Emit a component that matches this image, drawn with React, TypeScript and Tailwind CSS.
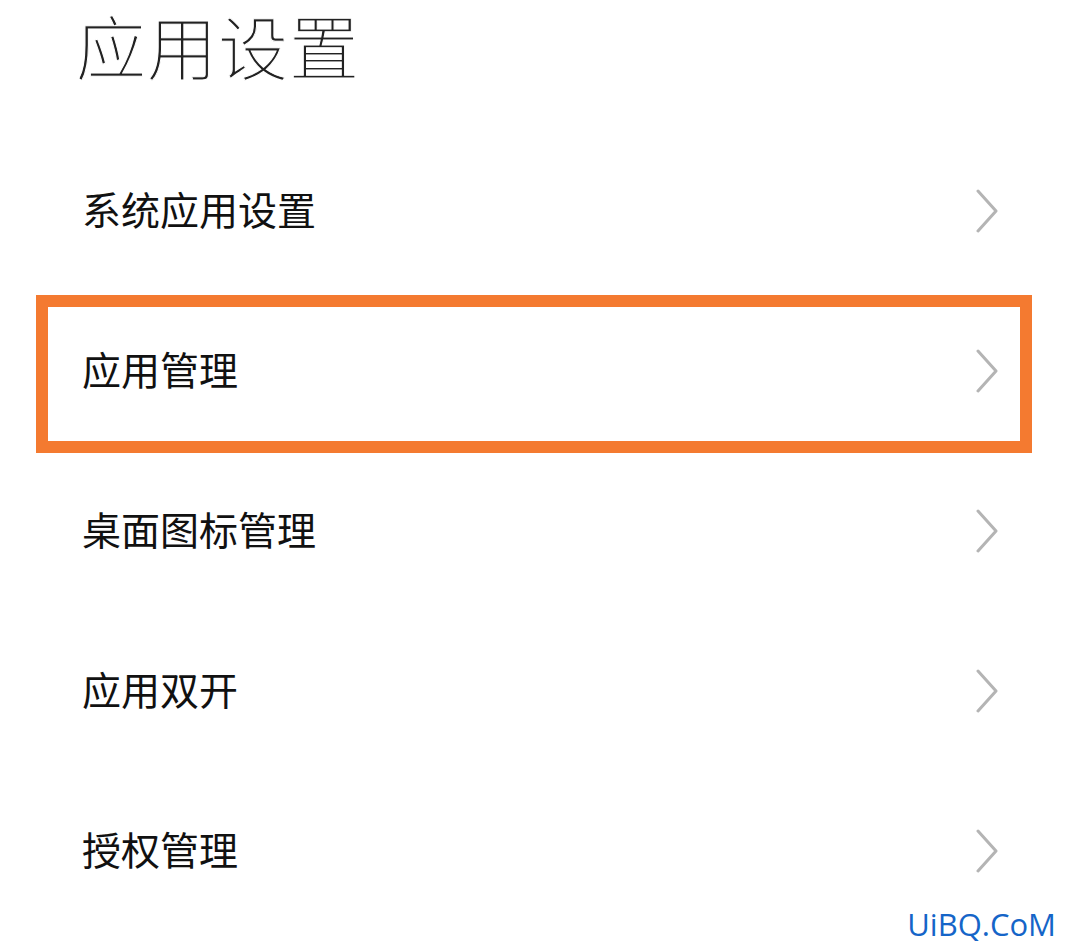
const rows = ["系统应用设置", "应用管理", "桌面图标管理", "应用双开", "授权管理"];

const cjk = "font-['Noto_Sans_CJK_SC','Noto_Sans',sans-serif]";

function Chevron() {
  return (
    <svg width="24" height="44" viewBox="0 0 24 44" fill="none" className="shrink-0">
      <path d="M3 2 L21 22 L3 42" stroke="#b4b4b4" strokeWidth="3" strokeLinecap="round" strokeLinejoin="round" />
    </svg>
  );
}

function Row({ label, marked }: { label: string; marked?: boolean }) {
  return (
    <div className="relative flex h-[160px] items-center justify-between pl-[82px] pr-[69px]">
      <span className={`${cjk} pb-[6px] text-[39px] leading-none text-[#111]`}>{label}</span>
      <Chevron />
      {marked && (
        <div className="pointer-events-none absolute top-[4px] left-[36px] h-[158px] w-[996px] border-[12px] border-[#f47a30]" />
      )}
    </div>
  );
}

export default function App() {
  return (
    <div className="relative h-[952px] w-[1068px] overflow-hidden bg-white">
      <div className="flex h-[131px] items-start pl-[76px]">
        <h1
          className={`${cjk} text-[70px] leading-[90px] font-extralight tracking-[1px] text-[#222] [-webkit-text-stroke:1px_white]`}
        >
          应用设置
        </h1>
      </div>
      <div className="flex flex-col">
        {rows.map((r, i) => (
          <Row key={r} label={r} marked={i === 1} />
        ))}
      </div>
      <div className="absolute right-[12px] bottom-[12px] font-['Open_Sans',sans-serif] text-[31px] leading-none text-[#1565c8]">
        UiBQ.CoM
      </div>
    </div>
  );
}
